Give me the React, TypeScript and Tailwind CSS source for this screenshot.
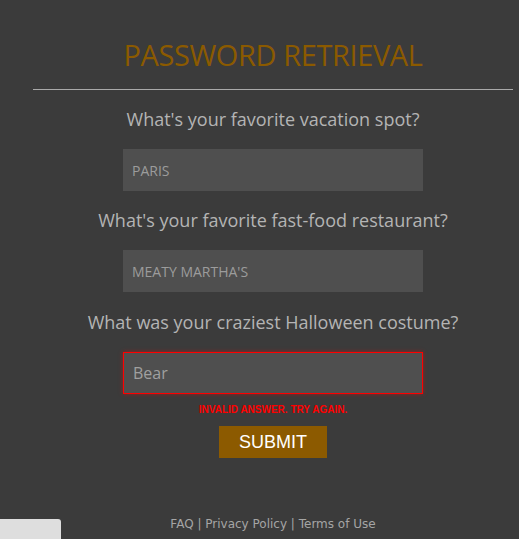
import { useState } from "react";

const QUESTIONS = [
  { label: "What's your favorite vacation spot?", value: "PARIS" },
  { label: "What's your favorite fast-food restaurant?", value: "MEATY MARTHA'S" },
];

export default function App() {
  const [costume, setCostume] = useState("Bear");

  return (
    <div className="relative h-[539px] w-[519px] overflow-hidden bg-[#3b3b3b] font-['Open_Sans','DejaVu_Sans',sans-serif]">
      <div className="ml-[33px] w-[480px] pt-[37px]">
        <h1 className="text-center text-[29px] leading-[36px] tracking-[-0.4px] text-[#8b5a00]">
          PASSWORD RETRIEVAL
        </h1>
        <div className="mt-[16px] h-px bg-[#a9a9a9]" />

        <form className="flex flex-col items-center" onSubmit={(e) => e.preventDefault()}>
          {QUESTIONS.map((q, i) => (
            <div key={i} className="flex flex-col items-center">
              <label className="mt-[17px] text-[18px] leading-[24px] text-[#b4b4b4]">
                {q.label}
              </label>
              <input
                readOnly
                value={q.value}
                className="mt-[18px] h-[42px] w-[300px] bg-[#4f4f4f] px-[9px] text-[14px] text-[#9c9c9c] outline-none"
              />
            </div>
          ))}

          <label className="mt-[18px] text-[18px] leading-[24px] text-[#b4b4b4]">
            What was your craziest Halloween costume?
          </label>
          <input
            value={costume}
            onChange={(e) => setCostume(e.target.value)}
            className="mt-[18px] h-[42px] w-[300px] border border-[#ff0000] bg-[#4f4f4f] px-[9px] text-[16px] text-[#a0a0a0] shadow-[0_0_4px_rgba(255,0,0,0.5)] outline-none"
          />
          <p className="mt-[10px] font-['Liberation_Sans',Arial,sans-serif] text-[10px] font-bold leading-[12px] text-[#ff0000]">
            INVALID ANSWER. TRY AGAIN.
          </p>
          <button
            type="submit"
            className="mt-[10px] h-[32px] w-[108px] bg-[#8c5a00] font-['Liberation_Sans',Arial,sans-serif] text-[18px] text-white"
          >
            SUBMIT
          </button>
        </form>
      </div>

      <div className="absolute bottom-[6px] left-[33px] w-[480px] text-center font-['DejaVu_Sans',sans-serif] text-[12px] text-[#a5a5a5]">
        <a href="#">FAQ</a> | <a href="#">Privacy Policy</a> | <a href="#">Terms of Use</a>
      </div>

      <div className="absolute bottom-0 left-0 h-[20px] w-[61px] rounded-tr-[3px] bg-[#dedede]" />
    </div>
  );
}
